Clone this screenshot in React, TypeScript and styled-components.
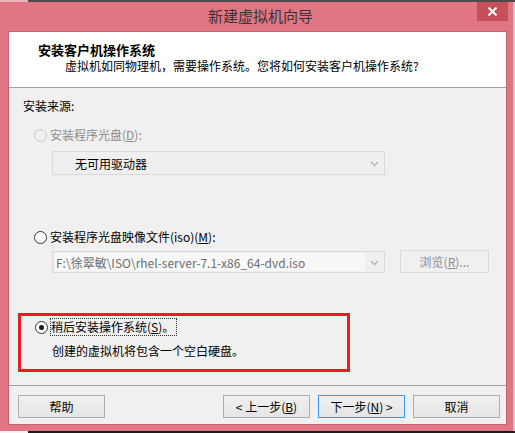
import styled, { createGlobalStyle } from "styled-components";

const GlobalStyle = createGlobalStyle`
  html, body {
    margin: 0;
    padding: 0;
    background: #e17683;
  }
  body {
    font-family: "Noto Sans CJK SC", "Noto Sans", sans-serif;
    font-size: 12px;
    color: #000;
  }
`;

export default function App() {
  return (
    <Page>
      <GlobalStyle />
      <EdgeStrip $light="#eeb4bb" $dark="#4f4a4c" />
      <Frame>
        <TitleBar>
          <TitleText>新建虚拟机向导</TitleText>
          <CloseButton>
            <svg width="11" height="9" viewBox="0 0 11 9">
              <path d="M1.5 0.5 L9.5 8.5 M9.5 0.5 L1.5 8.5" stroke="#fff" strokeWidth="2" />
            </svg>
          </CloseButton>
        </TitleBar>
        <Client>
          <Header>
            <HeaderTitle>安装客户机操作系统</HeaderTitle>
            <HeaderSub>虚拟机如同物理机，需要操作系统。您将如何安装客户机操作系统?</HeaderSub>
          </Header>
          <Body>
            <SourceLabel>安装来源:</SourceLabel>

            <RadioRow $top={14} $disabled>
              <Radio $disabled />
              <span>
                安装程序光盘(<u>D</u>):
              </span>
            </RadioRow>
            <Combo $top={8} $height={24}>
              <ComboText $dark>无可用驱动器</ComboText>
              <Chevron />
            </Combo>

            <RadioRow $top={54}>
              <Radio />
              <span>
                安装程序光盘映像文件(iso)(<u>M</u>):
              </span>
            </RadioRow>
            <FileLine>
              <Combo $top={0} $height={22}>
                <ComboField>F:\徐翠敏\ISO\rhel-server-7.1-x86_64-dvd.iso</ComboField>
                <Chevron />
              </Combo>
              <BrowseButton>
                浏览(<u>R</u>)...
              </BrowseButton>
            </FileLine>

            <Highlight>
              <RadioRow $top={0}>
                <Radio $checked />
                <FocusLabel>
                  稍后安装操作系统(<u>S</u>)。
                </FocusLabel>
              </RadioRow>
              <Note>创建的虚拟机将包含一个空白硬盘。</Note>
            </Highlight>
          </Body>
          <Footer>
            <Button>帮助</Button>
            <Spacer />
            <Button>
              &lt; 上一步(<u>B</u>)
            </Button>
            <Button $default>
              下一步(<u>N</u>) &gt;
            </Button>
            <Button>取消</Button>
          </Footer>
        </Client>
      </Frame>
      <EdgeStrip $light="#f7f3f4" $dark="#1c1c1c" />
    </Page>
  );
}

function Chevron() {
  return (
    <ChevronBox>
      <svg width="9" height="6" viewBox="0 0 9 6">
        <path d="M1 1 L4.5 4.5 L8 1" fill="none" stroke="#b4b4b4" strokeWidth="1.4" />
      </svg>
    </ChevronBox>
  );
}

const Page = styled.div`
  width: 515px;
  height: 433px;
  display: flex;
  flex-direction: column;
  overflow: hidden;
`;

const EdgeStrip = styled.div<{ $light: string; $dark: string }>`
  height: 2px;
  flex: none;
  background: linear-gradient(
    to right,
    ${(p) => p.$light} 0,
    ${(p) => p.$light} 28px,
    ${(p) => p.$dark} 28px
  );
`;

const Frame = styled.div`
  flex: 1;
  display: flex;
  flex-direction: column;
  background: #e17683;
  padding: 0 6px 6px 8px;
  border-right: 2px solid #c9c4c6;
  box-sizing: border-box;
  width: 515px;
`;

const TitleBar = styled.div`
  height: 29px;
  position: relative;
  display: flex;
  justify-content: center;
  align-items: center;
  flex: none;
`;

const TitleText = styled.div`
  font-family: "Noto Sans CJK SC", sans-serif;
  font-size: 15px;
  color: #3c3236;
  margin-top: -2px;
  margin-left: 6px;
`;

const CloseButton = styled.div`
  position: absolute;
  right: -1px;
  top: 0;
  width: 31px;
  height: 19px;
  background: #c84f5a;
  display: flex;
  align-items: center;
  justify-content: center;
`;

const Client = styled.div`
  flex: 1;
  display: flex;
  flex-direction: column;
  border: 1px solid #c6626e;
  background: #f0f0f0;
`;

const Header = styled.div`
  height: 56px;
  box-sizing: border-box;
  background: #fff;
  border-bottom: 1px solid #a0a0a0;
  padding: 10px 0 0 29px;
  flex: none;
`;

const HeaderTitle = styled.div`
  font-weight: bold;
  font-size: 13px;
  line-height: 15px;
`;

const HeaderSub = styled.div`
  margin: 1px 0 0 27px;
  line-height: 15px;
`;

const Body = styled.div`
  flex: 1;
  display: flex;
  flex-direction: column;
  padding: 10px 0 0 14px;
`;

const SourceLabel = styled.div`
  line-height: 15px;
`;

const RadioRow = styled.div<{ $top: number; $disabled?: boolean }>`
  margin: ${(p) => p.$top}px 0 0 11px;
  height: 16px;
  display: flex;
  align-items: center;
  gap: 3px;
  color: ${(p) => (p.$disabled ? "#8d8d8d" : "#000")};
  line-height: 16px;
`;

const Radio = styled.span<{ $checked?: boolean; $disabled?: boolean }>`
  width: 13px;
  height: 13px;
  box-sizing: border-box;
  border-radius: 50%;
  border: 1px solid ${(p) => (p.$disabled ? "#c8c8c8" : "#333")};
  background: ${(p) => (p.$disabled ? "#f0f0f0" : "#fff")};
  display: flex;
  align-items: center;
  justify-content: center;
  flex: none;
  &::after {
    content: "";
    width: 5px;
    height: 5px;
    border-radius: 50%;
    background: #1a1a1a;
    display: ${(p) => (p.$checked ? "block" : "none")};
  }
`;

const Combo = styled.div<{ $top: number; $height: number }>`
  margin: ${(p) => p.$top}px 0 0 29px;
  width: 333px;
  height: ${(p) => p.$height}px;
  box-sizing: border-box;
  border: 1px solid #d9d9d9;
  background: #efefef;
  display: flex;
  align-items: center;
  padding-left: 2px;
`;

const ComboText = styled.span<{ $dark?: boolean }>`
  flex: 1;
  padding-left: 20px;
  color: ${(p) => (p.$dark ? "#000" : "#6d6d6d")};
`;

const ComboField = styled.span`
  flex: 1;
  align-self: stretch;
  margin: 1px 0;
  background: #f8f8f8;
  color: #6d6d6d;
  display: flex;
  align-items: center;
  padding-left: 1px;
`;

const ChevronBox = styled.span`
  width: 19px;
  display: flex;
  justify-content: center;
  padding-top: 1px;
`;

const FileLine = styled.div`
  display: flex;
  align-items: center;
  gap: 15px;
  margin-top: 6px;
`;

const BrowseButton = styled.div`
  width: 89px;
  height: 23px;
  box-sizing: border-box;
  border: 1px solid #d9d9d9;
  background: #f0f0f0;
  color: #8d8d8d;
  display: flex;
  align-items: center;
  justify-content: center;
  margin-top: -1px;
`;

const Highlight = styled.div`
  margin: 40px 0 0 -5px;
  width: 332px;
  height: 59px;
  box-sizing: border-box;
  border: 3px solid #ed1c24;
  padding: 3px 0 0 3px;
  display: flex;
  flex-direction: column;
`;

const FocusLabel = styled.span`
  outline: 1px dotted #333;
  outline-offset: 0;
  padding-right: 2px;
`;

const Note = styled.div`
  margin: 8px 0 0 28px;
  line-height: 16px;
`;

const Footer = styled.div`
  height: 39px;
  box-sizing: border-box;
  border-top: 1px solid #a0a0a0;
  padding: 9px 6px 0 9px;
  display: flex;
  align-items: flex-start;
  gap: 8px;
  flex: none;
`;

const Spacer = styled.div`
  flex: 1;
`;

const Button = styled.div<{ $default?: boolean }>`
  width: 87px;
  height: 23px;
  box-sizing: border-box;
  border: 1px solid ${(p) => (p.$default ? "#3399ff" : "#adadad")};
  background: linear-gradient(#f0f0f0, #e5e5e5);
  display: flex;
  align-items: center;
  justify-content: center;
  white-space: pre;
`;
